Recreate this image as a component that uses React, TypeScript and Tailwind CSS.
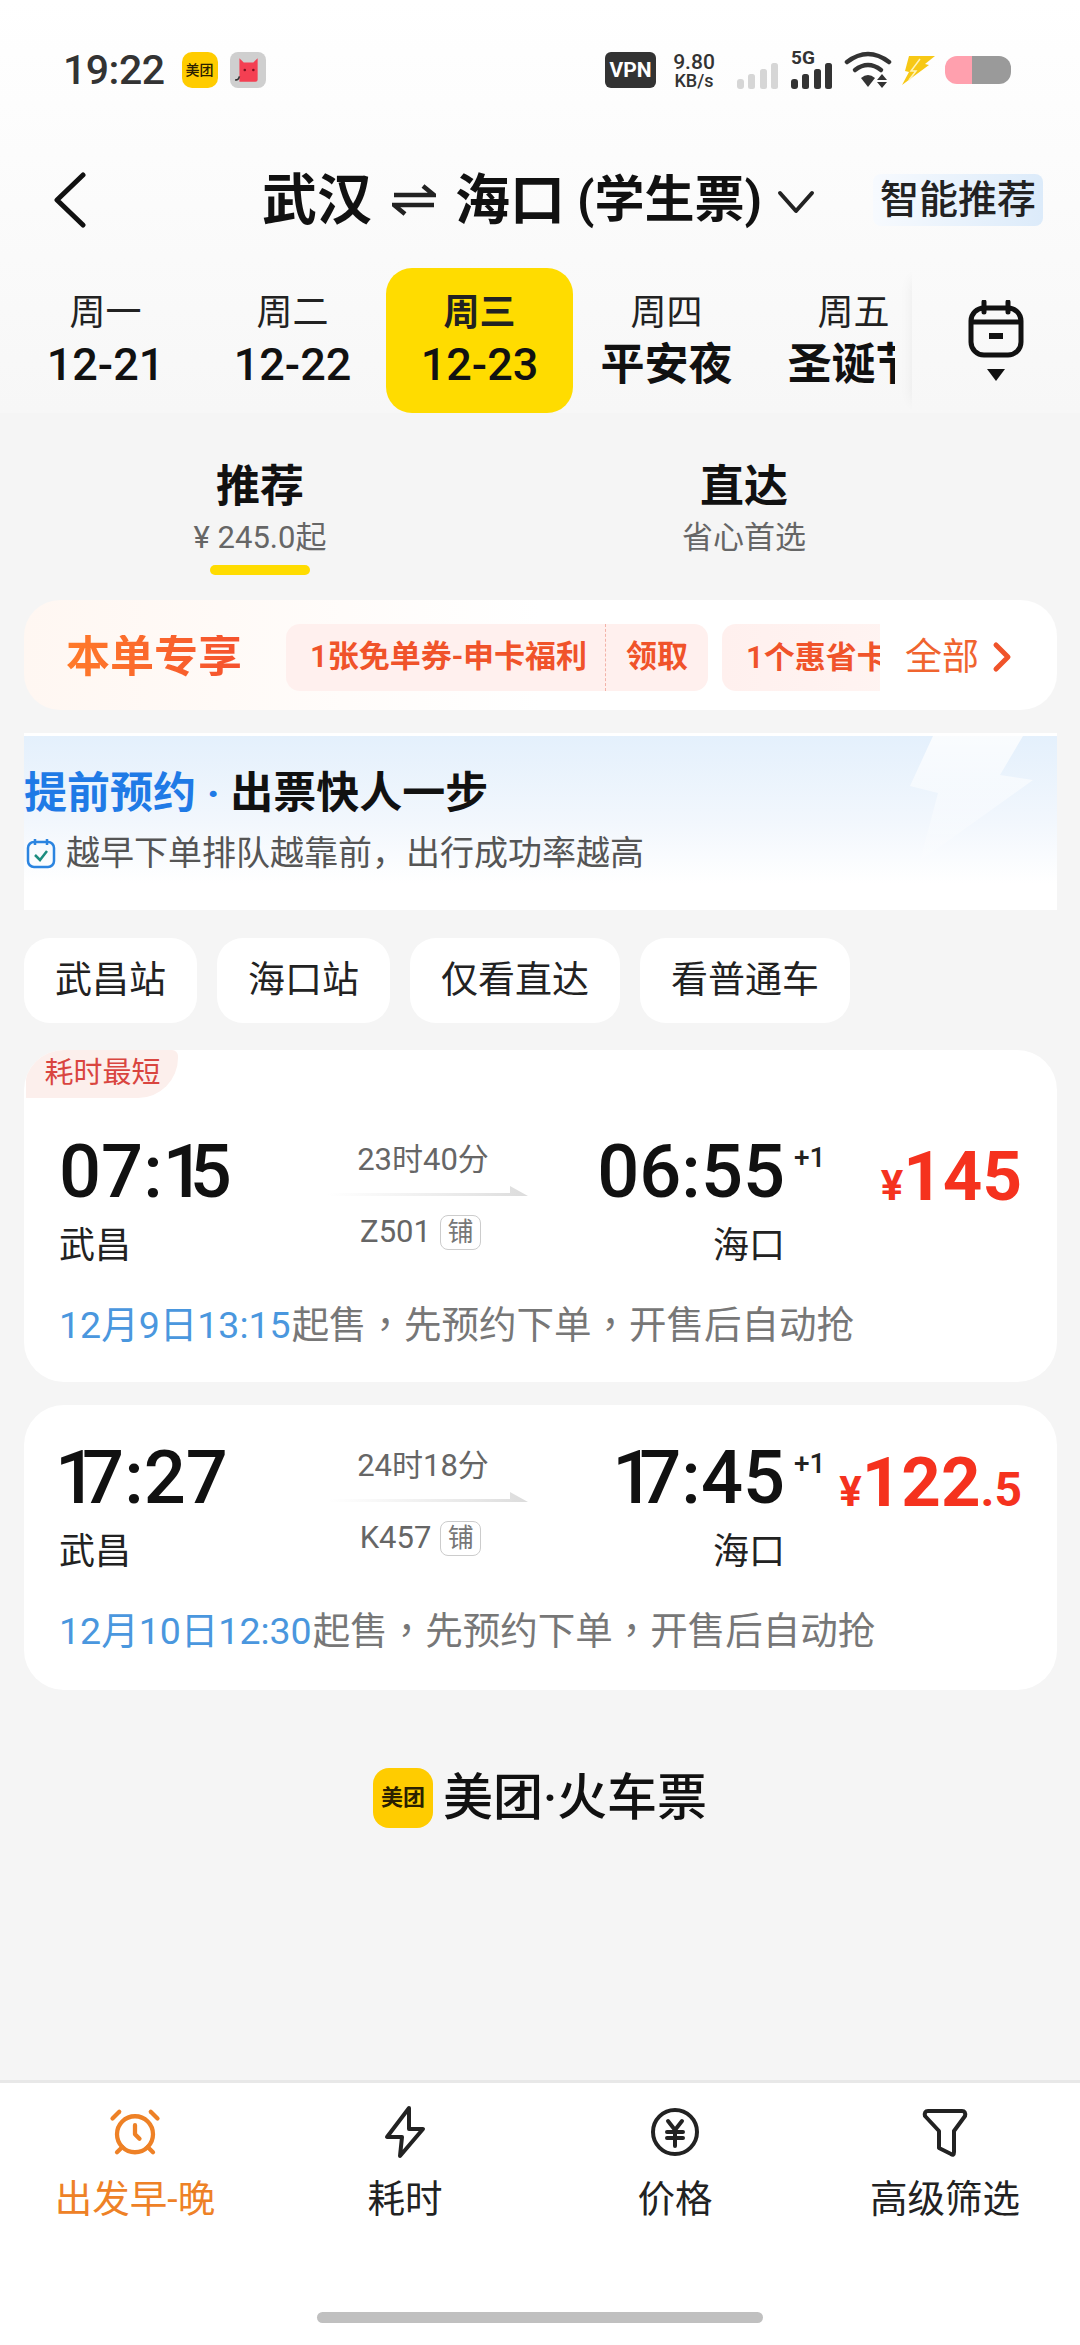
import { AlarmClock } from "lucide-react";

const days = [
  { week: "周一", label: "12-21" },
  { week: "周二", label: "12-22" },
  { week: "周三", label: "12-23", active: true },
  { week: "周四", label: "平安夜", holiday: true },
  { week: "周五", label: "圣诞节", holiday: true },
];

const filters = ["武昌站", "海口站", "仅看直达", "看普通车"];

const SignalBars = ({ className }: { className: string }) => (
  <svg width="42" height="26" viewBox="0 0 42 26" className={className} fill="currentColor">
    <rect x="0" y="16" width="7" height="10" rx="3" />
    <rect x="11" y="11" width="7" height="15" rx="2.5" />
    <rect x="23" y="6" width="7" height="20" rx="2.5" />
    <rect x="34" y="0" width="7" height="26" rx="2.5" />
  </svg>
);

const MeituanBadge = ({ className, textClass }: { className: string; textClass: string }) => (
  <div className={`flex items-center justify-center bg-[#ffcc00] ${className}`}>
    <span className={`text-[#2a2000] ${textClass}`}>美团</span>
  </div>
);

const StatusBar = () => (
  <div className="flex h-10 items-center pl-[63px] pr-[69px]">
    <span className="text-[41px] leading-10 font-medium tracking-[-0.5px] text-[#333]">19:22</span>
    <MeituanBadge className="ml-[17px] h-9 w-9 rounded-[10px]" textClass="text-[14px] leading-none font-medium" />
    <div className="ml-3 flex h-9 w-9 items-center justify-center rounded-[8px] bg-[#cfcfcf]">
      <svg width="28" height="30" viewBox="0 0 26 28">
        <path d="M5 3 L9 7 H18 L22 3 V23 Q22 25 20 25 H5 Z" fill="#f43f52" />
        <path d="M5 20 Q4 24 1 23" fill="none" stroke="#333" strokeWidth="1.5" />
        <circle cx="10" cy="14" r="1.2" fill="#7a1020" />
        <circle cx="18" cy="14" r="1.2" fill="#7a1020" />
      </svg>
    </div>
    <div className="ml-auto flex items-center">
      <div className="flex h-9 w-[51px] items-center justify-center rounded-[6px] bg-[#333] text-[21px] leading-none font-bold text-white">VPN</div>
      <div className="ml-[15px] flex w-[46px] flex-col items-center text-[#333]">
        <span className="text-[21px] leading-[20px] font-medium">9.80</span>
        <span className="text-[18px] leading-[17px] font-medium">KB/s</span>
      </div>
      <SignalBars className="mt-[12px] ml-[20px] text-[#d6d6d6]" />
      <div className="ml-3 flex w-[42px] flex-col">
        <span className="h-[14px] text-[19px] leading-[14px] font-bold text-[#333]">5G</span>
        <SignalBars className="-mt-0.5 text-[#333]" />
      </div>
      <svg width="48" height="38" viewBox="0 0 48 38" className="ml-[11px]">
        <g fill="none" stroke="#333" strokeWidth="4.5" strokeLinecap="round">
          <path d="M3 11 Q24 -5 45 11" />
          <path d="M11 19 Q24 9 37 19" />
        </g>
        <path d="M17 27 Q24 21 31 27 L24 36 Z" fill="#333" />
        <path d="M38 23 l5 6 h-10 Z M33 31 h10 l-5 6 Z" fill="#333" />
      </svg>
      <svg width="36" height="30" viewBox="0 0 36 30" className="ml-2">
        <path d="M9 1 H35 L25 9 L29 10 L2 30 L9 17 L5 16 Z" fill="#f7c815" />
        <path d="M20 4 L11 16 L16 16 L9 25" fill="none" stroke="#fff3b8" strokeWidth="1.5" />
      </svg>
      <div className="ml-[9px] flex h-7 w-[66px] overflow-hidden rounded-[12px]">
        <div className="w-[27px] bg-[#ffa0ae]" />
        <div className="flex-1 bg-[#9a9a9a]" />
      </div>
    </div>
  </div>
);

const Header = () => (
  <div className="mt-[75px] flex h-[70px] items-center">
    <svg width="33" height="56" viewBox="0 0 33 56" className="ml-[53px] shrink-0" fill="none" stroke="#111" strokeWidth="5" strokeLinecap="round" strokeLinejoin="round">
      <path d="M30 3 L4 28 L30 53" />
    </svg>
    <span className="ml-[176px] text-[55px] leading-[70px] font-bold text-[#111]">武汉</span>
    <svg width="44" height="32" viewBox="0 0 44 32" className="ml-[20px]" fill="none" stroke="#222" strokeWidth="4.5">
      <path d="M2 11 H42 L31 2" />
      <path d="M42 21 H2 L13 30" />
    </svg>
    <span className="ml-[19px] text-[55px] leading-[70px] font-bold text-[#111]">海口</span>
    <span className="ml-[12px] text-[50px] leading-[70px] font-bold text-[#111]">(学生票)</span>
    <svg width="38" height="24" viewBox="0 0 38 24" className="mt-1 ml-[15px]" fill="none" stroke="#222" strokeWidth="4" strokeLinecap="round" strokeLinejoin="round">
      <path d="M3 3 L19 21 L35 3" />
    </svg>
    <div className="ml-[58px] flex h-[52px] w-[170px] items-center justify-center rounded-[8px] bg-linear-to-r from-[#f7fafe] to-[#dcebfa] text-[39px] leading-none font-medium text-[#222]">
      智能推荐
    </div>
  </div>
);

const DateStrip = () => (
  <div className="mt-[33px] flex h-[145px]">
    <div className="ml-3 flex w-[883px] shrink-0 overflow-hidden">
      {days.map((d) => (
        <div
          key={d.week}
          className={`flex w-[187px] shrink-0 flex-col items-center overflow-hidden rounded-[26px] pt-[25px] ${d.active ? "bg-[#ffdc00]" : ""}`}
        >
          <span className={`text-[36px] leading-[40px] ${d.active ? "font-bold" : ""} text-[#222]`}>{d.week}</span>
          <span className={`mt-[6px] leading-[52px] whitespace-nowrap text-[#111] ${d.holiday ? "text-[44px] font-bold" : "text-[45px] font-medium"}`}>
            {d.label}
          </span>
        </div>
      ))}
    </div>
    <div className="ml-[17px] flex flex-1 flex-col items-center pt-[32px] shadow-[-10px_0_14px_-12px_rgba(0,0,0,0.08)]">
      <svg width="56" height="58" viewBox="0 0 56 58" fill="none" stroke="#111" strokeWidth="5">
        <rect x="3" y="8" width="50" height="47" rx="13" />
        <path d="M3 22 H53" />
        <path d="M16 2 V12 M40 2 V12" strokeLinecap="round" />
        <path d="M21 36 H35" strokeWidth="6" />
      </svg>
      <div className="mt-[11px] h-0 w-0 border-x-[9px] border-t-[12px] border-x-transparent border-t-[#111]" />
    </div>
  </div>
);

const Tabs = () => (
  <div className="mt-[44px] flex">
    <div className="ml-[160px] flex w-[200px] flex-col items-center">
      <span className="text-[44px] leading-[60px] font-bold text-[#111]">推荐</span>
      <span className="mt-[1px] text-[31px] leading-10 text-[#666]">¥ 245.0起</span>
      <div className="mt-[7px] h-[10px] w-[100px] rounded-full bg-[#ffdc00]" />
    </div>
    <div className="ml-[284px] flex w-[200px] flex-col items-center">
      <span className="text-[44px] leading-[60px] font-bold text-[#111]">直达</span>
      <span className="mt-[1px] text-[31px] leading-10 text-[#666]">省心首选</span>
    </div>
  </div>
);

const CouponBar = () => (
  <div className="mt-[25px] mr-[23px] ml-6 flex h-[110px] items-center rounded-[36px] bg-linear-to-r from-[#fff7f2] via-white to-white pt-[4px]">
    <span className="ml-[42px] w-[220px] bg-linear-to-r from-[#ff7a2a] to-[#f2452e] bg-clip-text text-[44px] leading-none font-bold text-transparent">
      本单专享
    </span>
    <div className="flex w-[594px] shrink-0 gap-[14px] overflow-hidden">
      <div className="flex h-[67px] w-[422px] shrink-0 items-center rounded-[14px] bg-[#fff0ee] text-[31px] font-semibold text-[#f0532a]">
        <span className="w-[319px] shrink-0 pl-6 whitespace-nowrap">1张免单券-申卡福利</span>
        <span className="flex h-full flex-1 items-center justify-center border-l border-dashed border-[#f3b3a8]">领取</span>
      </div>
      <div className="h-[67px] w-[300px] shrink-0 overflow-hidden rounded-[14px] bg-linear-to-r from-[#fff0ee] to-[#fff7f5] pl-6 text-[31px] leading-[67px] font-semibold whitespace-nowrap text-[#f0532a]">
        1个惠省卡
      </div>
    </div>
    <span className="ml-[25px] text-[37px] leading-none text-[#f0642f]">全部</span>
    <svg width="22" height="32" viewBox="0 0 22 32" className="ml-[12px]" fill="none" stroke="#f0532a" strokeWidth="5" strokeLinecap="round" strokeLinejoin="round">
      <path d="M5 4 L17 16 L5 28" />
    </svg>
  </div>
);

const Banner = () => (
  <div className="relative mt-[23px] mr-[23px] ml-6 h-[177px] overflow-hidden border-t-[3px] border-white bg-linear-to-b from-[#e4f0fc] via-[#f2f7fd] via-50% to-white to-85%">
    <svg width="130" height="130" viewBox="0 0 130 130" className="absolute top-0 left-[886px]">
      <defs>
        <linearGradient id="bolt-fade" x1="0" x2="0" y1="0" y2="1">
          <stop offset="0" stopColor="#ffffff" stopOpacity="0.8" />
          <stop offset="1" stopColor="#ffffff" stopOpacity="0.1" />
        </linearGradient>
      </defs>
      <path d="M23 0 H113 L90 39 L123 44 L10 125 L28 57 L0 50 Z" fill="url(#bolt-fade)" />
    </svg>
    <div className="relative mt-[30px] text-[43px] leading-[54px] font-bold whitespace-nowrap">
      <span className="text-[#1f7ae6]">提前预约 · </span>
      <span className="text-[#111]">出票快人一步</span>
    </div>
    <div className="relative mt-[13px] flex items-center">
      <svg width="30" height="32" viewBox="0 0 30 32" className="ml-[2px]" fill="none" stroke="#2b84e0" strokeWidth="2.5">
        <rect x="2" y="5" width="26" height="25" rx="6" />
        <path d="M9 2 V8 M21 2 V8" />
        <path d="M9 18 L14 23 L21 14" stroke="#1b8c7f" />
      </svg>
      <span className="ml-[10px] text-[34px] leading-10 whitespace-nowrap text-[#555]">越早下单排队越靠前，出行成功率越高</span>
    </div>
  </div>
);

const FilterChips = () => (
  <div className="mt-[28px] ml-6 flex gap-[20px]">
    {filters.map((f) => (
      <div key={f} className="flex h-[85px] items-center rounded-[26px] bg-white px-[31px] text-[37px] text-[#222]">
        {f}
      </div>
    ))}
  </div>
);

// the digit 1 sits tight against its neighbour in the big clock times
const ClockTime = ({ value }: { value: string }) => (
  <div className="text-[74px] leading-[80px] font-medium text-[#111]">
    {value.split("").map((c, i) =>
      c === "1" ? (
        <span key={i} className={`tracking-[-15px] ${i === 0 ? "-ml-[4px]" : ""}`}>
          1
        </span>
      ) : (
        <span key={i}>{c}</span>
      ),
    )}
  </div>
);

type TrainProps = {
  depart: string;
  arrive: string;
  duration: string;
  train: string;
  yuan: string;
  cents?: string;
  saleTime: string;
  tag?: string;
};

const TrainCard = ({ depart, arrive, duration, train, yuan, cents, saleTime, tag }: TrainProps) => (
  <div className={`mr-[23px] ml-6 overflow-hidden rounded-[40px] bg-white ${tag ? "pb-[32px]" : "pt-[33px] pb-[34px]"}`}>
    {tag && (
      <div className="mb-[34px] ml-[2px] h-[48px] w-[152px] rounded-tl-[30px] rounded-tr-[6px] rounded-br-[40px] bg-[#fcefec] pl-[1px] text-center text-[29px] leading-[46px] text-[#d9453f]">
        {tag}
      </div>
    )}
    <div className="flex h-[168px]">
      <div className="ml-[35px] w-[241px] shrink-0">
        <ClockTime value={depart} />
        <div className="mt-[9px] text-[36px] leading-[50px] text-[#222]">武昌</div>
      </div>
      <div className="flex w-[246px] shrink-0 flex-col items-center pt-2">
        <span className="text-[31px] leading-10 text-[#666]">{duration}</span>
        <svg width="200" height="12" viewBox="0 0 200 12" className="mt-[5px] ml-[10px]">
          <defs>
            <linearGradient id={`line-${train}`} x1="0" x2="1" y1="0" y2="0">
              <stop offset="0" stopColor="#e2e2e2" stopOpacity="0" />
              <stop offset="1" stopColor="#dcdcdc" />
            </linearGradient>
          </defs>
          <path d="M0 8 H182 V1 L200 11 H0 Z" fill={`url(#line-${train})`} />
        </svg>
        <div className="mt-[15px] -ml-[5px] flex items-center">
          <span className="text-[31px] leading-10 text-[#666]">{train}</span>
          <span className="ml-[9px] flex h-[35px] w-[41px] items-center justify-center rounded-[8px] border border-[#ccc] text-[26px] leading-none text-[#777]">
            铺
          </span>
        </div>
      </div>
      <div className="relative w-[239px] shrink-0 text-right">
        <ClockTime value={arrive} />
        <div className="mt-[9px] text-[36px] leading-[50px] text-[#222]">海口</div>
        <span className="absolute top-[10px] left-[calc(100%+9px)] text-[28px] leading-8 font-medium text-[#222]">+1</span>
      </div>
      <div className="flex-1 pt-[7px] pr-[35px] text-right leading-[76px] font-bold whitespace-nowrap text-[#f5321e]">
        <span className="text-[42px]">¥</span>
        <span className="text-[69px]">{yuan}</span>
        {cents && <span className="text-[48px]">{cents}</span>}
      </div>
    </div>
    <div className="ml-[35px] text-[37.5px] leading-[50px] whitespace-nowrap text-[#777]">
      <span className="text-[#4a97de]">{saleTime}</span>
      <span className="ml-[1px] font-['Roboto','Noto_Sans_CJK_TC',sans-serif]">起售，先预约下单，开售后自动抢</span>
    </div>
  </div>
);

const SortBar = () => (
  <div className="mt-auto flex h-[265px] flex-col border-t-[3px] border-[#e8e8e8] bg-white">
    <div className="grid grid-cols-4 pt-[22px]">
      <div className="flex flex-col items-center text-[#ee8126]">
        <AlarmClock className="h-[54px] w-[54px]" strokeWidth={1.9} />
        <span className="mt-[15px] text-[37.5px] leading-[50px] whitespace-nowrap">出发早-晚</span>
      </div>
      <div className="flex flex-col items-center text-[#222]">
        <svg width="54" height="54" viewBox="0 0 54 54" fill="none" stroke="currentColor" strokeWidth="4" strokeLinejoin="round">
          <path d="M31 3 L9 32 H24 L22 51 L45 24 H31 Z" />
        </svg>
        <span className="mt-[15px] text-[37.5px] leading-[50px]">耗时</span>
      </div>
      <div className="flex flex-col items-center text-[#222]">
        <svg width="54" height="54" viewBox="0 0 54 54" fill="none" stroke="currentColor" strokeWidth="4">
          <circle cx="27" cy="27" r="22" />
          <path d="M20 16 L27 25 L34 16 M19 27 H35 M19 33 H35 M27 25 V41" strokeLinecap="round" />
        </svg>
        <span className="mt-[15px] text-[37.5px] leading-[50px]">价格</span>
      </div>
      <div className="flex flex-col items-center text-[#222]">
        <svg width="54" height="54" viewBox="0 0 54 54" fill="none" stroke="currentColor" strokeWidth="4" strokeLinejoin="round">
          <path d="M10 6 H44 Q48 6 47 11 L36 26 V47 Q36 51 33 49 L21 43 V26 L7 11 Q6 6 10 6 Z" />
        </svg>
        <span className="mt-[15px] text-[37.5px] leading-[50px]">高级筛选</span>
      </div>
    </div>
    <div className="mx-auto mt-auto mb-[22px] h-[11px] w-[446px] rounded-full bg-[#c0c0c0]" />
  </div>
);

export default function App() {
  return (
    <div className="flex h-[2345px] w-[1080px] flex-col overflow-hidden bg-[#f5f5f5] font-['Roboto','Noto_Sans_CJK_SC',sans-serif]">
      <div className="bg-linear-to-b from-white to-[#f7f7f7] pt-[50px]">
        <StatusBar />
        <Header />
        <DateStrip />
      </div>
      <Tabs />
      <CouponBar />
      <Banner />
      <FilterChips />
      <div className="mt-[27px] flex flex-col gap-[23px]">
        <TrainCard
          tag="耗时最短"
          depart="07:15"
          arrive="06:55"
          duration="23时40分"
          train="Z501"
          yuan="145"
          saleTime="12月9日13:15"
        />
        <TrainCard
          depart="17:27"
          arrive="17:45"
          duration="24时18分"
          train="K457"
          yuan="122"
          cents=".5"
          saleTime="12月10日12:30"
        />
      </div>
      <div className="mt-[78px] flex items-center justify-center">
        <MeituanBadge className="h-[60px] w-[60px] rounded-[16px]" textClass="text-[22px] leading-none font-bold" />
        <span className="ml-[10px] text-[50px] leading-[60px] font-medium text-[#111]">美团·火车票</span>
      </div>
      <SortBar />
    </div>
  );
}
